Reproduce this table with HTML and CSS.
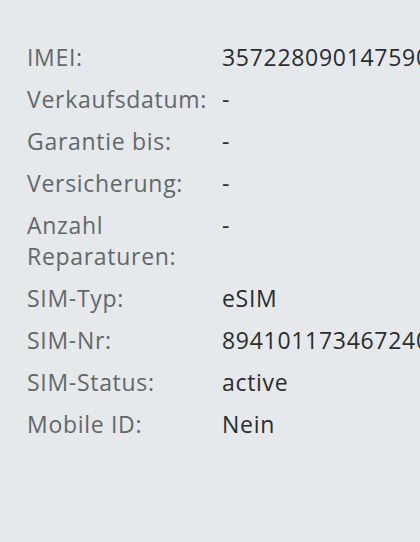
FILE: index.html
```html
<!DOCTYPE html>
<html lang="de">
<head>
<meta charset="utf-8">
<link rel="stylesheet" href="styles.css">
</head>
<body>
<dl class="details">
  <dt>IMEI:</dt><dd>357228090147590</dd>
  <dt>Verkaufsdatum:</dt><dd>-</dd>
  <dt>Garantie bis:</dt><dd>-</dd>
  <dt>Versicherung:</dt><dd>-</dd>
  <dt>Anzahl Reparaturen:</dt><dd>-</dd>
  <dt>SIM-Typ:</dt><dd>eSIM</dd>
  <dt>SIM-Nr:</dt><dd>89410117346724000000</dd>
  <dt>SIM-Status:</dt><dd>active</dd>
  <dt>Mobile ID:</dt><dd>Nein</dd>
</dl>
</body>
</html>
```
FILE: styles.css
```css
html, body {
  margin: 0;
  height: 100%;
  background: #e5e9ec;
  overflow: hidden;
}
.details {
  margin: 0;
  padding: 42px 0 0 27px;
  display: grid;
  grid-template-columns: 195px max-content;
  row-gap: 11px;
  font-family: "Open Sans", sans-serif;
  font-size: 23px;
  letter-spacing: 0.7px;
  line-height: 31px;
}
.details dt {
  color: #63676a;
  width: 160px;
}
.details dd {
  margin: 0;
  color: #2a2c2e;
  white-space: nowrap;
}
```
